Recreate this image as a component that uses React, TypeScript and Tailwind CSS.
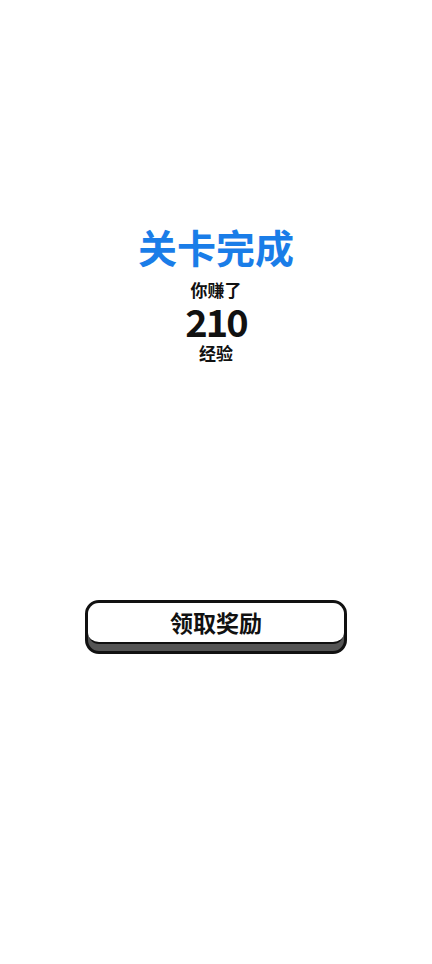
export default function App() {
  const font = { fontFamily: '"Noto Sans CJK SC", "Noto Sans", sans-serif' };
  return (
    <div className="w-[432px] h-[964px] bg-white flex flex-col items-center" style={font}>
      <div className="mt-[226px] text-[39px] leading-[40px] font-bold text-[#1a7de8]">关卡完成</div>
      <div className="mt-[14px] text-[17px] leading-[20px] font-bold text-[#111]">你赚了</div>
      <div className="mt-[2px] text-[38px] leading-[38px] font-bold text-[#111] tracking-[-2px]">210</div>
      <div className="mt-[3px] text-[17px] leading-[20px] font-bold text-[#111]">经验</div>
      <div className="mt-[237px] w-[262px] rounded-[14px] border-[3px] border-[#111] bg-[#555] pb-[7px]">
        <div className="h-[41px] rounded-[11px] bg-white border-b-[2px] border-[#111] flex items-center justify-center">
          <span className="text-[23px] font-bold text-[#111] leading-none">领取奖励</span>
        </div>
      </div>
    </div>
  );
}
